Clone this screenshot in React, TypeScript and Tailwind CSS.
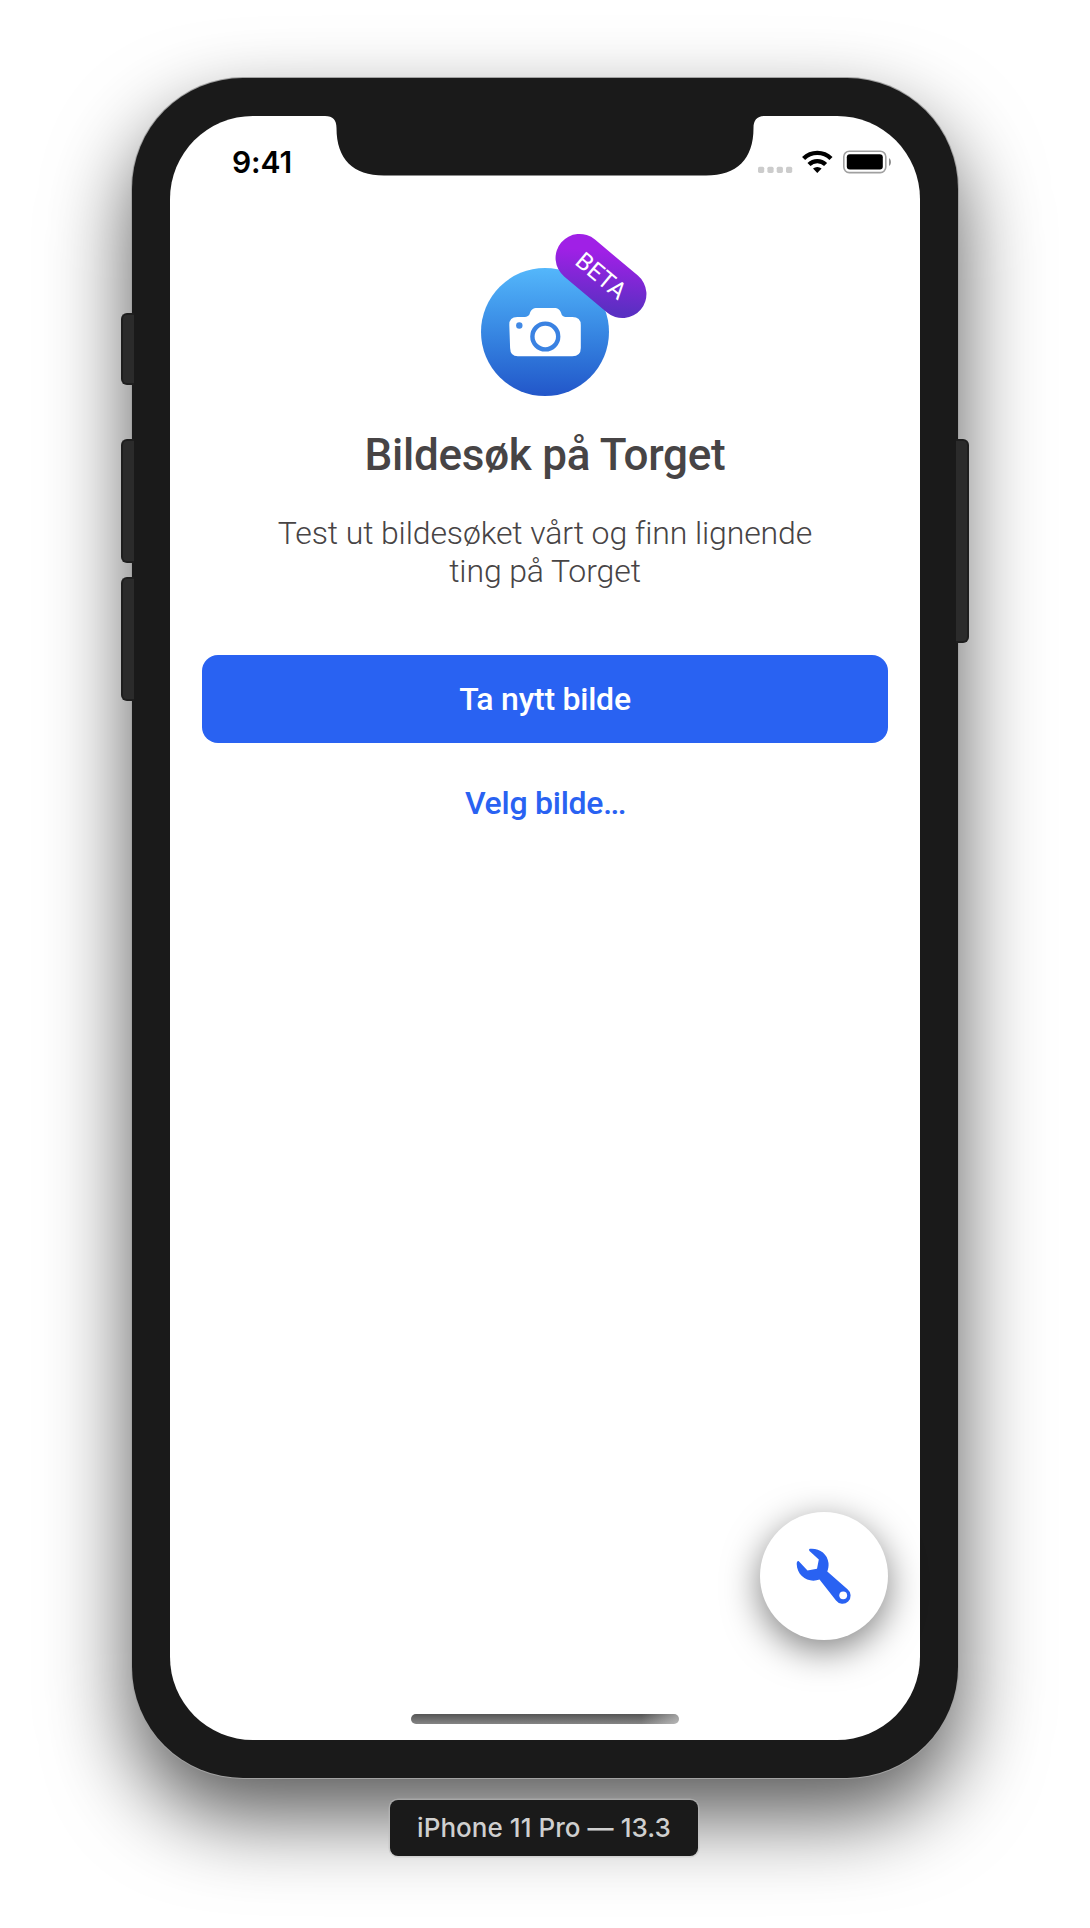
import React from "react";

function StatusBar() {
  return (
    <div className="flex h-[60px] items-start justify-between pl-[62px] pr-[28px]">
      <span className="mt-[28px] font-['Inter'] text-[30px] font-semibold leading-[36px] tracking-[-0.1px] text-black">
        9:41
      </span>
      <svg className="mt-[32px] h-[28px] w-[136px]" viewBox="756 148 136 28">
        {[758, 767.4, 776.7, 786].map((x) => (
          <rect key={x} x={x} y="166.7" width="6.2" height="6.2" rx="1.6" fill="#ccc" />
        ))}
        <g fill="none" stroke="#000" strokeWidth="4.4">
          <path d="M803.6 158.5a19.6 19.6 0 0 1 27.4 0" />
          <path d="M809 164.5a12 12 0 0 1 16.6 0" />
        </g>
        <path d="M817.3 173l-4.3-4.4a6.3 6.3 0 0 1 8.6 0z" />
        <rect x="843.8" y="151.2" width="42" height="21.4" rx="5.5" fill="none" stroke="#a0a0a0" strokeWidth="1.6" />
        <rect x="846.8" y="154.2" width="36" height="15.2" rx="3" />
        <path d="M889 158.3c2.6 1 2.6 6.800 0 7.600z" fill="#8c8c8c" />
      </svg>
    </div>
  );
}

function Notch() {
  return (
    <svg className="absolute left-[152px] top-[-1px] h-[61px] w-[446px]" viewBox="0 0 446 61">
      <path
        d="M0 0V1H3C11 1 14.500 5 14.500 13C14.500 44 31 60.500 62 60.500H384C415 60.500 431.500 44 431.500 13C431.500 5 435 1 443 1H446V0Z"
        fill="#1a1a1a"
      />
    </svg>
  );
}

function CameraBadge() {
  return (
    <div className="relative mt-[92px] flex size-32 items-center justify-center self-center rounded-full bg-gradient-to-b from-[#54b7fb] to-[#2356c9]">
      <svg className="size-32" viewBox="0.7 0 128 128">
        <path
          d="M37 49H43C48 49 49 47 49.500 45.500C50.500 42 52.500 40 57 40H73.500C78 40 80 42 81 45.500C81.500 47 82 49 87 49H92Q100.500 49 100.500 57V80Q100.500 88.300 92 88.300H37.500Q30 88.300 29.800 80L29 57Q28.800 49 37 49Z"
          fill="#fff"
        />
        <circle cx="65" cy="68.500" r="12.900" fill="none" stroke="#3a82e2" strokeWidth="4.400" />
        <circle cx="39" cy="57.500" r="3.200" fill="#4189e5" />
      </svg>
      <div className="absolute left-[68px] top-[-16px] flex h-[48px] w-[104px] rotate-[40deg] items-center justify-center rounded-full bg-[linear-gradient(145deg,#a020e6_25%,#5a2fc2_85%)] text-[24px] leading-none text-white">
        BETA
      </div>
    </div>
  );
}

function ToolButton() {
  return (
    <button className="mr-[32px] flex size-32 items-center justify-center self-end rounded-full bg-white shadow-[0_10px_36px_rgba(0,0,0,0.5)]">
      <svg className="size-32" viewBox="0 0 128 128">
        <path
          d="M50 36.800C59 35.900 67.500 41.500 68.500 51C68.800 54 68.200 57 67.300 59.500L87.500 77.300A8.100 8.100 0 1 1 76 88.500L59.500 67.500C49 71.500 37 64.500 36.700 52C36.700 50 37.700 48.500 38.800 49.300L47.500 58.500L57 56.700L58.800 47.500L49.500 38.900C48.800 38.200 49 37 50 36.800Z"
          fill="#2962f2"
        />
        <circle cx="83.200" cy="83.300" r="3.900" fill="#fff" />
      </svg>
    </button>
  );
}

const sideKey = "absolute rounded-l-[6px] border-2 border-r-0 border-[#1e1e1e] bg-[#2b2b2b] w-[13px] left-[-11px]";

export default function App() {
  return (
    <div className="flex h-[1928px] w-[1090px] flex-col items-center overflow-hidden bg-white pt-[78px] font-['Roboto',sans-serif]">
      <div className="relative h-[1700px] w-[826px] shrink-0 rounded-[111px] bg-[#1a1a1a] p-[38px] shadow-[0_0_0_1px_#a2a2a2,0_38px_84px_rgba(0,0,0,0.66)]">
        <div className={`${sideKey} top-[235px] h-[72px]`} />
        <div className={`${sideKey} top-[361px] h-[124px]`} />
        <div className={`${sideKey} top-[499px] h-[124px]`} />
        <div className="absolute right-[-11px] top-[361px] h-[204px] w-[13px] rounded-r-[6px] border-2 border-l-0 border-[#1e1e1e] bg-[#2b2b2b]" />
        <main className="relative flex h-[1624px] w-[750px] flex-col rounded-[83px] bg-white">
          <Notch />
          <StatusBar />
          <CameraBadge />
          <h1 className="mt-[33px] whitespace-nowrap text-center text-[44px] font-medium leading-[52px] tracking-[-0.25px] text-[#474445]">
            Bildesøk på Torget
          </h1>
          <p className="mt-[33px] whitespace-nowrap text-center text-[32px] font-light leading-[38px] tracking-[-0.12px] text-[#474445]">
            Test ut bildesøket vårt og finn lignende
            <br />
            ting på Torget
          </p>
          <button className="mx-8 mt-[65px] h-[88px] rounded-2xl bg-[#2962f2] text-[32px] font-medium tracking-[-0.25px] text-white">
            Ta nytt bilde
          </button>
          <button className="mt-[40px] h-[40px] text-[32px] font-medium leading-[40px] tracking-[-0.25px] text-[#2962f2]">
            Velg bilde<span className="tracking-[-1.6px]">...</span>
          </button>
          <div className="grow" />
          <ToolButton />
          <div className="mb-[16px] mt-[74px] h-[10px] w-[268px] self-center rounded-full bg-[linear-gradient(90deg,transparent_86%,rgba(255,255,255,0.4)_99%),linear-gradient(#555,#858585)]" />
        </main>
      </div>
      <div className="z-10 mt-[22px] flex h-[56px] w-[308px] shrink-0 items-center justify-center self-start ml-[390px] pb-px rounded-[8px] bg-[#1a1a1a] font-['Inter'] text-[26px] font-medium tracking-[0.05px] text-[#cfcfcf] shadow-[0_0_0_1.500px_rgba(190,190,190,0.5)]">
        iPhone 11 Pro — 13.3
      </div>
    </div>
  );
}
